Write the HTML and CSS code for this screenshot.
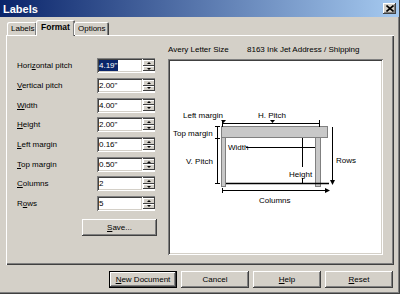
FILE: index.html
```html
<!DOCTYPE html>
<html lang="en">
<head>
    <meta charset="UTF-8">
    <meta name="viewport" content="width=device-width, initial-scale=1.0">
    <title>Labels</title>
    <link rel="stylesheet" href="styles.css">
</head>
<body>
    <div class="window">
        <div class="titlebar">
            <span class="title">Labels</span>
            <span class="close">
                <svg width="8" height="7" viewBox="0 0 8 7"><path d="M0.5 0.5L7.5 6.5M7.5 0.5L0.5 6.5" stroke="#000" stroke-width="1.6"/></svg>
            </span>
        </div>

        <div class="tabs">
            <div class="tab">Labels</div>
            <div class="tab active">Format</div>
            <div class="tab">Options</div>
        </div>

        <div class="panel">
            <div class="fields">
                <div class="field">
                    <span class="field-label">Hori<u>z</u>ontal pitch</span>
                    <div class="spin"><div class="spin-input"><span class="selected">4.19"</span></div><div class="spin-btns"><span class="up"></span><span class="down"></span></div></div>
                </div>
                <div class="field">
                    <span class="field-label"><u>V</u>ertical pitch</span>
                    <div class="spin"><div class="spin-input">2.00"</div><div class="spin-btns"><span class="up"></span><span class="down"></span></div></div>
                </div>
                <div class="field">
                    <span class="field-label"><u>W</u>idth</span>
                    <div class="spin"><div class="spin-input">4.00"</div><div class="spin-btns"><span class="up"></span><span class="down"></span></div></div>
                </div>
                <div class="field">
                    <span class="field-label"><u>H</u>eight</span>
                    <div class="spin"><div class="spin-input">2.00"</div><div class="spin-btns"><span class="up"></span><span class="down"></span></div></div>
                </div>
                <div class="field">
                    <span class="field-label"><u>L</u>eft margin</span>
                    <div class="spin"><div class="spin-input">0.16"</div><div class="spin-btns"><span class="up"></span><span class="down"></span></div></div>
                </div>
                <div class="field">
                    <span class="field-label"><u>T</u>op margin</span>
                    <div class="spin"><div class="spin-input">0.50"</div><div class="spin-btns"><span class="up"></span><span class="down"></span></div></div>
                </div>
                <div class="field">
                    <span class="field-label"><u>C</u>olumns</span>
                    <div class="spin"><div class="spin-input">2</div><div class="spin-btns"><span class="up"></span><span class="down"></span></div></div>
                </div>
                <div class="field">
                    <span class="field-label">R<u>o</u>ws</span>
                    <div class="spin"><div class="spin-input">5</div><div class="spin-btns"><span class="up"></span><span class="down"></span></div></div>
                </div>
                <div class="btn save"><u>S</u>ave...</div>
            </div>

            <div class="preview">
                <div class="preview-head">
                    <span class="brand">Avery Letter Size</span>
                    <span>8163 Ink Jet Address / Shipping</span>
                </div>
                <div class="preview-box">
                    <svg class="diagram" width="215" height="196" viewBox="168 59 215 196">
                        <g fill="#c8c8c8" stroke="#808080">
                            <rect x="221.5" y="126.5" width="106" height="11"/>
                            <rect x="221.5" y="137.5" width="4" height="49"/>
                            <rect x="315.5" y="137.5" width="5" height="49"/>
                        </g>
                        <g stroke="#000" fill="none">
                            <path d="M222 123.5H320M222.5 120V127M319.5 120V127"/>
                            <path d="M226 183.5H329" stroke-width="1.4"/>
                            <path d="M246 147.5H315"/>
                            <path d="M302.5 138V167M302.5 178V183"/>
                            <path d="M217.5 126V183M215 126.5H220M215 138.5H220M215 183.5H220"/>
                            <path d="M332.5 127V181"/>
                            <path d="M222 190.5H326M222.5 188V193"/>
                        </g>
                        <g fill="#000">
                            <path d="M221 120h5l-2.5 3z"/>
                            <path d="M270 120h5l-2.5 3z"/>
                            <path d="M330 180h5l-2.5 5z"/>
                            <path d="M325 188v5l5-2.5z"/>
                        </g>
                        <g class="diagram-text">
                            <text x="183" y="118">Left margin</text>
                            <text x="258" y="118">H. Pitch</text>
                            <text x="173" y="136">Top margin</text>
                            <text x="186" y="164">V. Pitch</text>
                            <text x="228" y="150">Width</text>
                            <text x="289" y="177">Height</text>
                            <text x="336" y="163">Rows</text>
                            <text x="259" y="203">Columns</text>
                        </g>
                    </svg>
                </div>
            </div>
        </div>

        <div class="buttons">
            <div class="btn default"><u>N</u>ew Document</div>
            <div class="btn">Cancel</div>
            <div class="btn"><u>H</u>elp</div>
            <div class="btn"><u>R</u>eset</div>
        </div>
    </div>
</body>
</html>
```

FILE: styles.css
```css
* {
    margin: 0;
    padding: 0;
    box-sizing: border-box;
    font-family: "Liberation Sans", Arial, sans-serif;
}

body {
    background-color: #d4d0c8;
}

.window {
    width: 400px;
    height: 294px;
    background-color: #d4d0c8;
    box-shadow: inset -1px -1px #404040, inset -2px -2px #808080;
    font-size: 8px;
    color: #000;
}

/* Barra de título */
.titlebar {
    height: 17px;
    margin-right: 1px;
    display: flex;
    align-items: center;
    justify-content: space-between;
    padding: 0 3px 0 3px;
    background: linear-gradient(to right, #0a246a, #a6caf0);
}

.title {
    color: #fff;
    font-weight: bold;
    font-size: 11px;
}

.close {
    width: 13px;
    height: 11px;
    display: flex;
    align-items: center;
    justify-content: center;
    background-color: #d4d0c8;
    box-shadow: inset -1px -1px #404040, inset 1px 1px #fff, inset -2px -2px #808080;
}

/* Abas */
.tabs {
    display: flex;
    align-items: flex-end;
    height: 15px;
    margin-top: 3px;
    padding-left: 7px;
    position: relative;
    z-index: 1;
}

.tab {
    height: 13px;
    line-height: 13px;
    padding: 0 4px;
    text-align: center;
    border-top-left-radius: 2px;
    border-top-right-radius: 2px;
    box-shadow: inset 1px 1px #fff, inset -1px 0 #404040, inset -2px 0 #808080;
}

.tab:nth-child(1) {
    width: 30px;
}

.tab:nth-child(3) {
    width: 35px;
}

.tab.active {
    width: 39px;
    height: 16px;
    line-height: 15px;
    margin-bottom: -1px;
    margin-left: -1px;
    margin-right: -1px;
    font-weight: bold;
    font-size: 8.5px;
    background-color: #d4d0c8;
}

.panel {
    display: flex;
    height: 230px;
    margin: 0 6px;
    padding: 0 11px;
    box-shadow: inset 1px 1px #fff, inset -1px -1px #404040, inset -2px -2px #808080;
}

/* Campos */
.fields {
    width: 151px;
    padding-top: 21px;
}

.field {
    display: flex;
    align-items: center;
    height: 19.7px;
}

.field-label {
    width: 80px;
}

.spin {
    display: flex;
    height: 15px;
}

.spin-input {
    width: 46px;
    height: 15px;
    padding: 2px 0 0 2px;
    line-height: 11px;
    background-color: #fff;
    box-shadow: inset 1px 1px #808080, inset -1px -1px #fff, inset 2px 2px #404040, inset -2px -2px #d4d0c8;
}

.selected {
    display: inline-block;
    background-color: #0a246a;
    color: #fff;
    padding-right: 1px;
}

.spin-btns {
    width: 12px;
    display: flex;
    flex-direction: column;
    padding: 2px 0;
    background-color: #fff;
    box-shadow: inset 0 1px #808080, inset 0 2px #404040, inset -1px -1px #fff;
}

.spin-btns span {
    flex: 1;
    display: flex;
    align-items: center;
    justify-content: center;
    background-color: #d4d0c8;
    box-shadow: inset -1px -1px #404040, inset 1px 1px #fff;
}

.spin-btns .up::before,
.spin-btns .down::before {
    content: "";
    border-left: 2px solid transparent;
    border-right: 2px solid transparent;
}

.spin-btns .up::before {
    border-bottom: 2px solid #000;
}

.spin-btns .down::before {
    border-top: 2px solid #000;
}

/* Botões */
.btn {
    height: 17px;
    line-height: 17px;
    text-align: center;
    background-color: #d4d0c8;
    box-shadow: inset -1px -1px #404040, inset 1px 1px #fff, inset -2px -2px #808080, inset 2px 2px #d4d0c8;
}

.btn.default {
    box-shadow: inset 0 0 0 1px #000, inset -2px -2px #404040, inset 2px 2px #fff, inset -3px -3px #808080;
}

.save {
    width: 75px;
    margin-top: 5.5px;
    margin-left: 65px;
}

.buttons {
    display: flex;
    justify-content: flex-end;
    gap: 4px;
    margin-top: 6px;
    padding-right: 7px;
}

.buttons .btn {
    width: 68px;
}

/* Pré-visualização */
.preview {
    width: 215px;
    padding-top: 9px;
}

.preview-head {
    display: flex;
    height: 11px;
    line-height: 11px;
    margin-bottom: 4px;
}

.brand {
    width: 79px;
}

.preview-box {
    height: 196px;
    background-color: #fff;
    box-shadow: inset 1px 1px #808080, inset -1px -1px #fff, inset 2px 2px #404040, inset -2px -2px #d4d0c8;
}

.diagram {
    display: block;
}

.diagram-text {
    font-family: "Liberation Sans", Arial, sans-serif;
    font-size: 8px;
    fill: #000;
}
```
